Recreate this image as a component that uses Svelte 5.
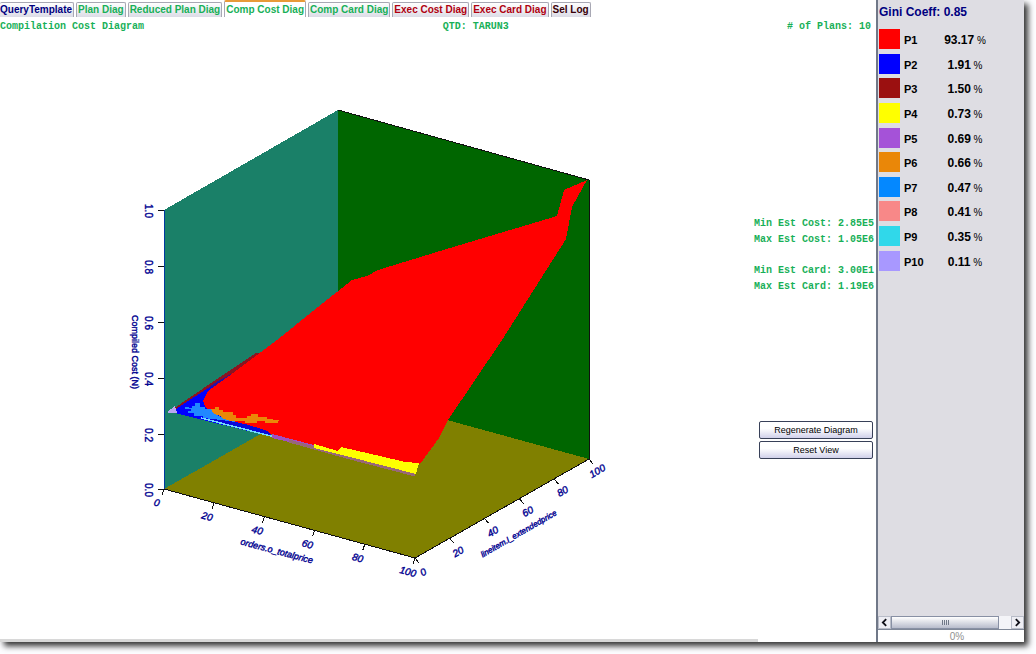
<script lang="ts">
  const tabs = [
    { label: 'QueryTemplate', tone: 'navy' },
    { label: 'Plan Diag', tone: 'green' },
    { label: 'Reduced Plan Diag', tone: 'green' },
    { label: 'Comp Cost Diag', tone: 'green' },
    { label: 'Comp Card Diag', tone: 'green' },
    { label: 'Exec Cost Diag', tone: 'red' },
    { label: 'Exec Card Diag', tone: 'red' },
    { label: 'Sel Log', tone: 'maroon' },
  ];

  const plans = [
    { name: 'P1', share: '93.17', color: '#ff0000' },
    { name: 'P2', share: '1.91', color: '#0000ff' },
    { name: 'P3', share: '1.50', color: '#9b1010' },
    { name: 'P4', share: '0.73', color: '#ffff00' },
    { name: 'P5', share: '0.69', color: '#a552d8' },
    { name: 'P6', share: '0.66', color: '#ea8708' },
    { name: 'P7', share: '0.47', color: '#0488ff' },
    { name: 'P8', share: '0.41', color: '#f88888' },
    { name: 'P9', share: '0.35', color: '#30d8ea' },
    { name: 'P10', share: '0.11', color: '#a898ff' },
  ];

  const costTicks = [
    { label: '1.0', y: 210 },
    { label: '0.8', y: 266 },
    { label: '0.6', y: 322 },
    { label: '0.4', y: 378 },
    { label: '0.2', y: 434 },
    { label: '0.0', y: 489 },
  ];

  // shared by both floor axes
  const floorTicks = [0, 20, 40, 60, 80, 100];

  let active = $state('Comp Cost Diag');
</script>

<div class="window">
  <main>
    <nav class="tabs" role="tablist">
      {#each tabs as tab}
        <button
          class="tab {tab.tone}"
          class:active={active === tab.label}
          role="tab"
          aria-selected={active === tab.label}
          onclick={() => (active = tab.label)}
        >
          {tab.label}
        </button>
      {/each}
    </nav>

    <header class="info">
      <span>Compilation Cost Diagram</span>
      <span>QTD: TARUN3</span>
      <span class="right"># of Plans: 10</span>
    </header>

    <div class="body">
      <svg class="plot" viewBox="0 34 754 604" preserveAspectRatio="xMinYMin meet" role="img" aria-label="Compilation cost surface">
        <g shape-rendering="crispEdges">
          <polygon points="164,210 338,110 338,390 164,489" fill="#1a8068" />
          <polygon points="338,110 589,180 589,459 338,390" fill="#006600" />
          <polygon points="164,489 338,390 589,459 415,558" fill="#808000" />

          <polygon points="170,411 214,381 256,353 264,352 236,380 180,412" fill="#8b1420" />
          <polygon points="173,411 214,384 236,372 240,376 212,412 270,430 272,437 175,413" fill="#0000ff" />
          <polygon points="205,390 218,381 237,371 234,376 220,384" fill="#2a10a0" />
          <polygon points="167,412 175,406 177,413 168,413" fill="#b8a8f0" />
          <polygon
            points="233,373 253,358 277,340 313,311 352,280 367,276 378,270 440,251 557,216 564,190 587,180 572,207 566,239 502,340 448,420 439,438 420,464 340,452 314,446 270,434 250,427 212,413 206,408 203,401 208,391"
            fill="#ff0000"
          />
          <polygon
            points="185,407 192,408 192,406 195,406 195,403 200,403 200,407 205,407 205,409 211,409 215,414 223,418 235,420 235,422 222,420 203,418 203,416 194,416 194,413 188,413 188,411 191,411 191,409 185,409"
            fill="#2088ff"
          />
          <polygon
            points="211,409 215,409 215,407 219,407 219,410 223,410 223,412 233,412 233,415 236,415 236,418 247,418 247,416 251,416 251,414 258,414 258,417 267,417 267,419 279,420 278,423 265,423 265,421 257,421 257,423 245,423 245,421 230,421 222,418 220,416 213,413"
            fill="#ea8708"
          />
          <polygon points="201,418 222,420 245,424 268,431 272,437 236,427" fill="#0808d8" />
          <polyline points="201,418 236,427 290,441" fill="none" stroke="#70d8ff" stroke-width="1.5" />
          <polygon points="272,434 314,445 314,449 289,442 272,438" fill="#a050c0" />
          <polyline points="289,441 350,458 415,475" fill="none" stroke="#986878" stroke-width="3" />
          <polygon points="314,444 338,451 341,447 380,456 405,462 419,463 416,474 350,457 314,448" fill="#ffff00" />

          <g fill="none" stroke="#101010">
            <path d="M338 110L589 180V459M164 489L415 558L589 459" />
            <path d="M164 210V489" stroke="#0038a0" />
            {#each costTicks as tick}
              <path d="M158 {tick.y}h6" />
            {/each}
            {#each floorTicks as t}
              <path d="M{164 + t * 2.51} {489 + t * 0.69}l-2 6" />
              <path d="M{415 + t * 1.74} {558 - t * 0.99}l4 5" />
            {/each}
          </g>
        </g>

        <g class="labels">
          {#each costTicks as tick}
            <text transform="translate(145 {tick.y + 1}) rotate(90)">{tick.label}</text>
          {/each}
          <text class="title" transform="translate(132 352) rotate(90)">Compiled Cost (N)</text>
          {#each floorTicks as t}
            <text class="slant" transform="translate({156 + t * 2.51} {506 + t * 0.69}) rotate(15)">{t}</text>
            <text class="slant" transform="translate({425 + t * 1.74} {575 - t * 1.01}) rotate(-30)">{t}</text>
          {/each}
          <text class="title slant" transform="translate(276 554) rotate(15)">orders.o_totalprice</text>
          <text class="small slant" transform="translate(520 536) rotate(-30)">lineitem.l_extendedprice</text>
        </g>
      </svg>

      <aside class="stats">
        <div class="group">
          <p>Min Est Cost: 2.85E5</p>
          <p>Max Est Cost: 1.05E6</p>
        </div>
        <div class="group">
          <p>Min Est Card: 3.00E1</p>
          <p>Max Est Card: 1.19E6</p>
        </div>
        <div class="actions">
          <button>Regenerate Diagram</button>
          <button>Reset View</button>
        </div>
      </aside>
    </div>
    <div class="strip"></div>
  </main>

  <aside class="legend">
    <h2>Gini Coeff: 0.85</h2>
    <table>
      <tbody>
        {#each plans as plan}
          <tr>
            <td class="key"><span class="swatch" style="background: {plan.color}"></span></td>
            <th scope="row">{plan.name}</th>
            <td class="share"><b>{plan.share}</b> %</td>
          </tr>
        {/each}
      </tbody>
    </table>
    <div class="scrollbar">
      <button aria-label="Scroll left">
        <svg viewBox="0 0 8 8"><path d="M5.5 1L2.5 4L5.5 7" /></svg>
      </button>
      <div class="track"><div class="thumb"><i></i><i></i><i></i><i></i></div></div>
      <button aria-label="Scroll right">
        <svg viewBox="0 0 8 8"><path d="M2.5 1L5.5 4L2.5 7" /></svg>
      </button>
    </div>
    <div class="progress">0%</div>
  </aside>
</div>

<style>
  :global(body) {
    background: #fdfdff;
    padding: 0 12px 12px 0;
  }
  .window {
    display: flex;
    min-height: calc(100vh - 12px);
    background: #fff;
    font-family: 'Liberation Sans', Arial, sans-serif;
    box-shadow: 4px 4px 6px rgba(0, 0, 0, 0.8);
  }
  button {
    font-family: inherit;
    margin: 0;
  }
  main {
    flex: 1;
    min-width: 0;
    display: flex;
    flex-direction: column;
  }

  .tabs {
    display: flex;
    align-items: flex-end;
    gap: 2px;
    height: 17px;
  }
  .tab {
    height: 15px;
    padding: 0 1px;
    border: 1px solid #a8a8b4;
    border-bottom: none;
    border-radius: 2px 2px 0 0;
    background: linear-gradient(#fff, #dcdce6);
    font-size: 10px;
    line-height: 14px;
    font-weight: bold;
    white-space: nowrap;
  }
  .tab:first-child {
    padding-left: 0;
    border-left: none;
  }
  .tab.active {
    height: 17px;
    border-top: 2px solid #e89a38;
    background: #fff;
  }
  .navy {
    color: #000080;
  }
  .green {
    color: #18b058;
  }
  .red {
    color: #b00010;
  }
  .maroon {
    color: #380008;
  }

  .info {
    display: grid;
    grid-template-columns: 11fr auto 9fr;
    padding: 4px 5px 0 0;
    height: 13px;
  }
  .info,
  .stats {
    font-family: 'Liberation Mono', 'Courier New', monospace;
    font-size: 10px;
    font-weight: bold;
    color: #18b058;
  }
  .right {
    text-align: right;
  }

  .body {
    display: flex;
    align-items: flex-start;
    flex: 1;
  }
  .plot {
    flex: 1;
    min-width: 0;
    display: block;
  }
  .labels {
    font-size: 10px;
    fill: #000090;
    stroke: #000090;
    stroke-width: 0.4px;
    text-anchor: middle;
  }
  .title {
    font-size: 9px;
  }
  .small {
    font-size: 8px;
  }
  .slant {
    font-style: italic;
  }

  .stats {
    width: 120px;
    padding: 182px 2px 0 0;
  }
  .group {
    margin-bottom: 15px;
  }
  p {
    margin: 0;
    line-height: 16px;
    white-space: nowrap;
    text-align: right;
  }
  .actions {
    display: flex;
    flex-direction: column;
    gap: 2px;
    margin-top: 126px;
    padding: 0 1px 0 5px;
    font-family: 'Liberation Sans', Arial, sans-serif;
  }
  .actions button {
    height: 18px;
    padding: 0;
    border: 1px solid #384058;
    border-radius: 2px;
    background: linear-gradient(#fff 40%, #d0d0ea);
    font-size: 9px;
    color: #000;
  }
  .strip {
    width: 758px;
    max-width: 100%;
    height: 3px;
    background: #d8d8d8;
  }

  .legend {
    width: 146px;
    display: flex;
    flex-direction: column;
    border-left: 2px solid #707888;
    background: #dedde3;
  }
  h2 {
    margin: 0;
    padding: 5px 0 0 1px;
    height: 22px;
    font-size: 12px;
    line-height: 15px;
    color: #000080;
  }
  table {
    width: 120px;
    height: 246px;
    border-collapse: collapse;
    color: #000;
    font-size: 11px;
  }
  td,
  th {
    padding: 0;
    text-align: left;
  }
  th,
  .share {
    padding-top: 2px;
  }
  .key {
    width: 26px;
  }
  .swatch {
    display: block;
    width: 21px;
    height: 20px;
    margin-left: 1px;
  }
  .share {
    width: 66px;
    text-align: center;
    font-size: 10px;
  }
  .share b {
    font-size: 12px;
  }

  .scrollbar {
    display: flex;
    height: 13px;
    margin-top: auto;
    border-bottom: 1px solid #808898;
  }
  .scrollbar button {
    width: 13px;
    padding: 0;
    border: 1px solid #b8bcc8;
    background: #eeeef4;
  }
  .scrollbar svg {
    display: block;
    width: 9px;
    height: 9px;
    margin: auto;
  }
  .scrollbar path {
    fill: none;
    stroke: #101018;
    stroke-width: 1.6;
  }
  .track {
    flex: 1;
    background: #f4f4f8;
  }
  .thumb {
    box-sizing: border-box;
    display: flex;
    align-items: center;
    justify-content: center;
    gap: 1px;
    width: 90%;
    height: 100%;
    border: 1px solid #8890a4;
    background: linear-gradient(#fff, #b8bccc);
  }
  .thumb i {
    width: 1px;
    height: 5px;
    background: #707888;
  }
  .progress {
    height: 12px;
    padding-left: 12px;
    background: #fff;
    color: #909090;
    font-size: 10px;
    line-height: 13px;
    text-align: center;
  }
</style>
